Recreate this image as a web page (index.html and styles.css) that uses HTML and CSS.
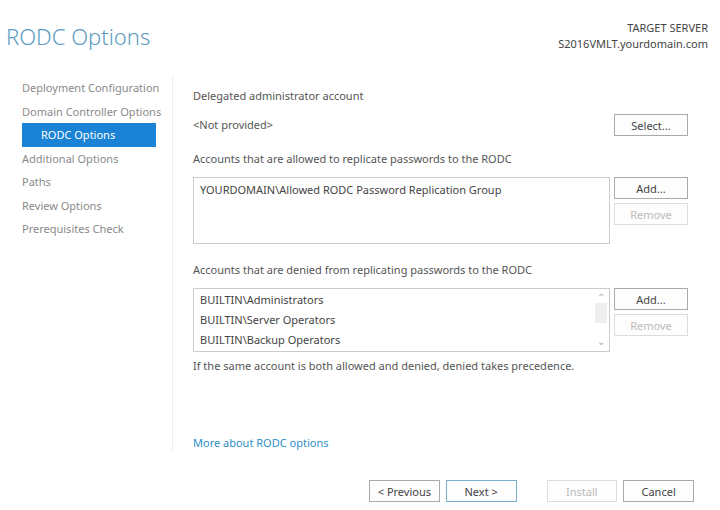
FILE: index.html
```html
<!DOCTYPE html>
<html lang="en">
<head>
    <meta charset="UTF-8">
    <title>RODC Options</title>
    <link rel="stylesheet" href="styles.css">
</head>
<body>
    <div class="header">
        <h1 class="title">RODC Options</h1>
        <div class="target">
            <div class="target-label">TARGET SERVER</div>
            <div>S2016VMLT.yourdomain.com</div>
        </div>
    </div>

    <div class="wizard">
        <ul class="steps">
            <li>Deployment Configuration</li>
            <li>Domain Controller Options</li>
            <li class="active">RODC Options</li>
            <li>Additional Options</li>
            <li>Paths</li>
            <li>Review Options</li>
            <li>Prerequisites Check</li>
        </ul>

        <div class="content">
            <div class="label first">Delegated administrator account</div>
            <div class="row">
                <div class="value">&lt;Not provided&gt;</div>
                <div class="btn-col">
                    <button class="btn">Select...</button>
                </div>
            </div>

            <div class="label">Accounts that are allowed to replicate passwords to the RODC</div>
            <div class="row">
                <div class="listbox allowed">
                    <div class="list-item">YOURDOMAIN\Allowed RODC Password Replication Group</div>
                </div>
                <div class="btn-col">
                    <button class="btn">Add...</button>
                    <button class="btn" disabled>Remove</button>
                </div>
            </div>

            <div class="label denied-label">Accounts that are denied from replicating passwords to the RODC</div>
            <div class="row">
                <div class="listbox denied">
                    <div class="items">
                        <div class="list-item">BUILTIN\Administrators</div>
                        <div class="list-item">BUILTIN\Server Operators</div>
                        <div class="list-item">BUILTIN\Backup Operators</div>
                    </div>
                    <div class="scrollbar">
                        <span class="arrow">&#8963;</span>
                        <span class="thumb"></span>
                        <span class="arrow down">&#8964;</span>
                    </div>
                </div>
                <div class="btn-col">
                    <button class="btn">Add...</button>
                    <button class="btn" disabled>Remove</button>
                </div>
            </div>
            <div class="note">If the same account is both allowed and denied, denied takes precedence.</div>

            <a class="more" href="#">More about RODC options</a>
        </div>
    </div>

    <div class="footer">
        <button class="btn">&lt; Previous</button>
        <button class="btn default">Next &gt;</button>
        <button class="btn install" disabled>Install</button>
        <button class="btn">Cancel</button>
    </div>
</body>
</html>
```

FILE: styles.css
```css
body {
    font-family: "Noto Sans", "Open Sans", sans-serif;
    font-size: 11px;
    margin: 0;
    background: #fff;
    color: #555;
    width: 720px;
    height: 510px;
    overflow: hidden;
}

.header {
    display: flex;
    justify-content: space-between;
    padding: 20px 12px 0 6px;
    height: 55px;
}

.title {
    margin: 0;
    font-size: 22px;
    font-weight: 300;
    color: #5d9dc2;
    line-height: 32px;
}

.target {
    text-align: right;
    line-height: 16px;
    color: #444;
}

.wizard {
    display: grid;
    grid-template-columns: 173px 1fr;
    height: 376px;
}

.steps {
    list-style: none;
    margin: 0;
    padding: 1px 16px 0 22px;
    border-right: 1px solid #eee;
    color: #8a8a8a;
}

.steps li {
    height: 23.5px;
    line-height: 23.5px;
    white-space: nowrap;
}

.steps li.active {
    background: #1a83d6;
    color: #fff;
    padding-left: 19px;
}

.content {
    padding: 0 32px 0 20px;
}

.label {
    height: 20px;
    line-height: 20px;
    margin-top: 13px;
    color: #555;
}

.label.first {
    margin-top: 11px;
}

.label.denied-label {
    margin-top: 16px;
}

.row {
    display: flex;
    gap: 4px;
    margin-top: 8px;
}

.value {
    flex: 1;
    line-height: 22px;
}

.btn-col {
    display: flex;
    flex-direction: column;
    gap: 4px;
    width: 74px;
}

.btn {
    font-family: inherit;
    font-size: 11px;
    color: #444;
    background: #fdfdfd;
    border: 1px solid #aaa;
    height: 22px;
    padding: 0;
    width: 74px;
}

.btn:disabled {
    color: #bbb;
    border-color: #ddd;
}

.listbox {
    flex: 1;
    border: 1px solid #ccc;
    background: #fff;
}

.listbox.allowed {
    height: 61px;
    padding: 2px 6px;
}

.listbox.denied {
    height: 62px;
    display: flex;
}

.listbox.denied .items {
    flex: 1;
    padding: 1px 6px;
}

.list-item {
    line-height: 20px;
    color: #444;
}

.scrollbar {
    width: 16px;
    display: flex;
    flex-direction: column;
    align-items: center;
    color: #aaa;
    font-size: 10px;
}

.arrow {
    height: 14px;
    line-height: 16px;
}

.arrow.down {
    line-height: 8px;
    margin-top: auto;
}

.thumb {
    width: 12px;
    height: 20px;
    background: #eee;
}

.note {
    margin-top: 4px;
    line-height: 20px;
}

.more {
    display: block;
    margin-top: 59px;
    color: #2d8fc3;
    text-decoration: none;
}

.footer {
    display: flex;
    gap: 6px;
    padding: 29px 26px 0 369px;
}

.footer .btn {
    width: 72px;
}

.footer .btn.default {
    border-color: #7aaecd;
}

.footer .btn.install {
    margin-left: 24px;
}
```
